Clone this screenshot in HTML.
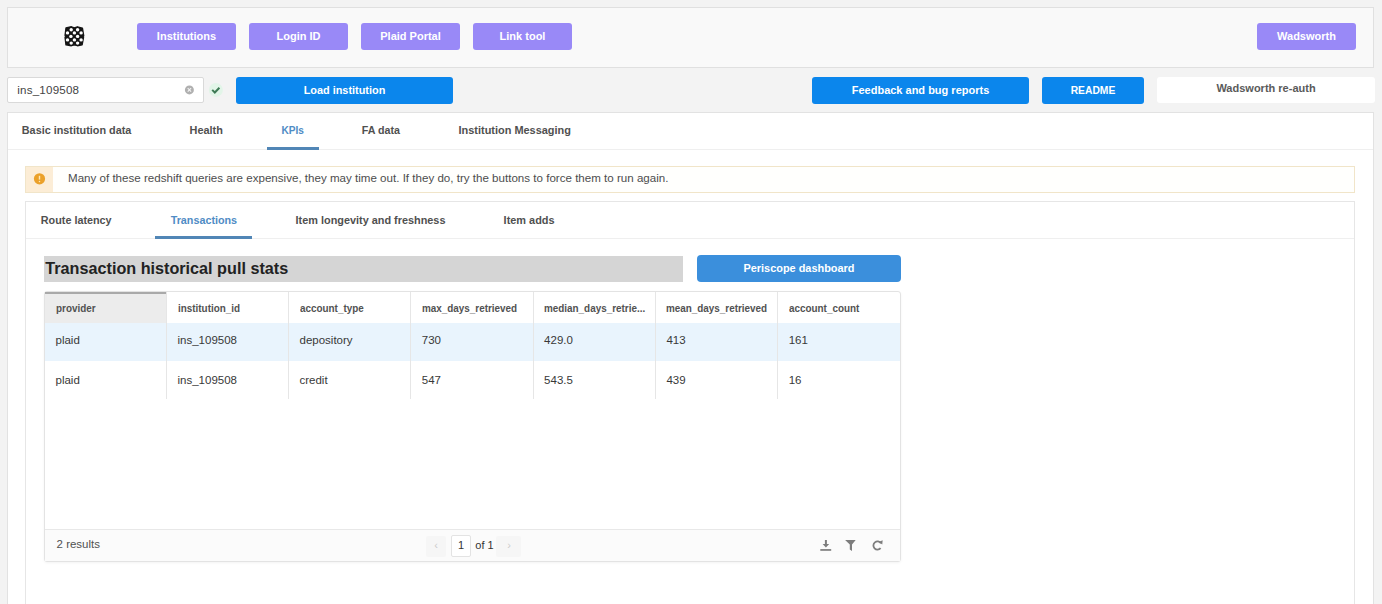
<!DOCTYPE html>
<html><head><meta charset="utf-8"><style>
html,body{margin:0;padding:0;}
body{width:1382px;height:604px;overflow:hidden;position:relative;background:#f3f3f3;font-family:"Liberation Sans",sans-serif;}
body>div,body>svg{position:absolute;}
</style></head><body>
<div style="left:7px;top:7px;width:1367px;height:61px;background:#f9f9f9;border:1px solid #e0e0e0;box-sizing:border-box;"></div>
<svg style="left:60px;top:21px" width="30" height="30" viewBox="0 0 30 30"><polygon points="6.0,7.0 11.4,5.8 14.4,6.8 17.4,5.8 22.4,7.2 23.7,14.9 22.9,15.4 23.5,16.4 22.1,23.8 17.4,24.7 14.4,23.8 11.4,24.7 6.0,23.8 5.1,16.4 5.7,15.4 5.1,14.4" fill="#151515" stroke="#151515" stroke-width="1.4" stroke-linejoin="round"/><circle cx="11.2" cy="8.7" r="1.7" fill="#fff"/><circle cx="17.6" cy="8.7" r="1.7" fill="#fff"/><circle cx="7.5" cy="11.9" r="1.7" fill="#fff"/><circle cx="14.4" cy="11.9" r="1.7" fill="#fff"/><circle cx="21.1" cy="11.9" r="1.7" fill="#fff"/><circle cx="10.9" cy="15.4" r="1.7" fill="#fff"/><circle cx="17.6" cy="15.4" r="1.7" fill="#fff"/><circle cx="7.5" cy="18.9" r="1.7" fill="#fff"/><circle cx="14.4" cy="18.9" r="1.7" fill="#fff"/><circle cx="21.1" cy="18.9" r="1.7" fill="#fff"/><circle cx="11.2" cy="22.1" r="1.7" fill="#fff"/><circle cx="17.6" cy="22.1" r="1.7" fill="#fff"/></svg>
<div style="left:137px;top:23px;width:99px;height:27px;background:#9989f7;border-radius:3px;"></div>
<div style="left:137.0px;width:99px;text-align:center;top:29.39px;font-size:11px;line-height:14px;font-weight:bold;color:#fff;white-space:nowrap;">Institutions</div>
<div style="left:249px;top:23px;width:99px;height:27px;background:#9989f7;border-radius:3px;"></div>
<div style="left:249.0px;width:99px;text-align:center;top:29.39px;font-size:11px;line-height:14px;font-weight:bold;color:#fff;white-space:nowrap;">Login ID</div>
<div style="left:361px;top:23px;width:99px;height:27px;background:#9989f7;border-radius:3px;"></div>
<div style="left:361.0px;width:99px;text-align:center;top:29.39px;font-size:11px;line-height:14px;font-weight:bold;color:#fff;white-space:nowrap;">Plaid Portal</div>
<div style="left:473px;top:23px;width:99px;height:27px;background:#9989f7;border-radius:3px;"></div>
<div style="left:473.0px;width:99px;text-align:center;top:29.39px;font-size:11px;line-height:14px;font-weight:bold;color:#fff;white-space:nowrap;">Link tool</div>
<div style="left:1257px;top:23px;width:99px;height:27px;background:#9989f7;border-radius:3px;"></div>
<div style="left:1257.0px;width:99px;text-align:center;top:29.39px;font-size:11px;line-height:14px;font-weight:bold;color:#fff;white-space:nowrap;">Wadsworth</div>
<div style="left:7px;top:77px;width:197px;height:26px;background:#fff;border:1px solid #d9d9d9;box-sizing:border-box;border-radius:2px;"></div>
<div style="left:17.3px;top:81.78px;font-size:11.6px;line-height:15px;font-weight:normal;color:#444;white-space:nowrap;letter-spacing:0.2px;">ins_109508</div>
<svg style="left:184px;top:85px" width="11" height="11" viewBox="0 0 11 11"><circle cx="5.4" cy="4.9" r="4.5" fill="#b0b0b0"/><path d="M3.7 3.2 L7.1 6.6 M7.1 3.2 L3.7 6.6" stroke="#f4f4f4" stroke-width="1.1"/></svg>
<svg style="left:208px;top:82px" width="16" height="16" viewBox="0 0 16 16"><circle cx="7.9" cy="7.9" r="7" fill="#e2f5e8"/><path d="M4.2 7.9 L6.8 10.5 L11.4 5.8" stroke="#3f7a55" stroke-width="2" fill="none"/></svg>
<div style="left:236px;top:77px;width:217px;height:27px;background:#0b86ec;border-radius:3px;"></div>
<div style="left:236.0px;width:217px;text-align:center;top:82.82px;font-size:10.9px;line-height:14px;font-weight:bold;color:#fff;white-space:nowrap;">Load institution</div>
<div style="left:812px;top:77px;width:217px;height:27px;background:#0b86ec;border-radius:3px;"></div>
<div style="left:812.0px;width:217px;text-align:center;top:82.79px;font-size:11px;line-height:14px;font-weight:bold;color:#fff;white-space:nowrap;">Feedback and bug reports</div>
<div style="left:1042px;top:77px;width:102px;height:27px;background:#0b86ec;border-radius:3px;"></div>
<div style="left:1042.0px;width:102px;text-align:center;top:83.53px;font-size:10.3px;line-height:13px;font-weight:bold;color:#fff;white-space:nowrap;">README</div>
<div style="left:1157px;top:77px;width:218px;height:26px;background:#fff;border-radius:3px;"></div>
<div style="left:1157.0px;width:218px;text-align:center;top:81.29px;font-size:11.0px;line-height:14px;font-weight:bold;color:#5a5a5a;white-space:nowrap;">Wadsworth re-auth</div>
<div style="left:7px;top:112px;width:1367px;height:500px;background:#fff;border:1px solid #e2e2e2;box-sizing:border-box;"></div>
<div style="left:8px;top:149px;width:1365px;height:1px;background:#efefef;"></div>
<div style="left:21.8px;top:122.84px;font-size:10.84px;line-height:14px;font-weight:bold;color:#505050;white-space:nowrap;">Basic institution data</div>
<div style="left:189.6px;top:122.82px;font-size:10.9px;line-height:14px;font-weight:bold;color:#505050;white-space:nowrap;">Health</div>
<div style="left:281.5px;top:123.60px;font-size:10.1px;line-height:13px;font-weight:bold;color:#4f8cc5;white-space:nowrap;">KPIs</div>
<div style="left:361.8px;top:122.89px;font-size:10.7px;line-height:14px;font-weight:bold;color:#505050;white-space:nowrap;">FA data</div>
<div style="left:458.5px;top:122.81px;font-size:10.94px;line-height:14px;font-weight:bold;color:#505050;white-space:nowrap;">Institution Messaging</div>
<div style="left:267px;top:147px;width:52px;height:3px;background:#5186b6;"></div>
<div style="left:25px;top:166px;width:1330px;height:27px;background:#fffffd;border:1px solid #f1e5c9;box-sizing:border-box;"></div>
<div style="left:26px;top:167px;width:27px;height:25px;background:#fcedd6;"></div>
<svg style="left:33px;top:172px" width="13" height="13" viewBox="0 0 13 13"><circle cx="6.5" cy="6.8" r="5.6" fill="#eba12a"/><path d="M6.5 3.8 V7.6" stroke="#fde9b8" stroke-width="1.4"/><circle cx="6.5" cy="9.4" r="0.75" fill="#fde9b8"/></svg>
<div style="left:68px;top:170.88px;font-size:11.59px;line-height:15px;font-weight:normal;color:#4d4d4d;white-space:nowrap;">Many of these redshift queries are expensive, they may time out. If they do, try the buttons to force them to run again.</div>
<div style="left:25px;top:201px;width:1330px;height:420px;background:#fff;border:1px solid #e6e6e6;box-sizing:border-box;"></div>
<div style="left:26px;top:238px;width:1328px;height:1px;background:#efefef;"></div>
<div style="left:40.8px;top:212.56px;font-size:10.8px;line-height:14px;font-weight:bold;color:#505050;white-space:nowrap;">Route latency</div>
<div style="left:170.7px;top:212.56px;font-size:10.78px;line-height:14px;font-weight:bold;color:#4f8cc5;white-space:nowrap;">Transactions</div>
<div style="left:295.6px;top:212.53px;font-size:10.88px;line-height:14px;font-weight:bold;color:#505050;white-space:nowrap;">Item longevity and freshness</div>
<div style="left:503.6px;top:212.51px;font-size:10.93px;line-height:14px;font-weight:bold;color:#505050;white-space:nowrap;">Item adds</div>
<div style="left:155px;top:236px;width:97px;height:3px;background:#5186b6;"></div>
<div style="left:44px;top:256px;width:639px;height:26px;background:#d5d5d5;"></div>
<div style="left:45.3px;top:257.99px;font-size:16.2px;line-height:21px;font-weight:bold;color:#222;white-space:nowrap;">Transaction historical pull stats</div>
<div style="left:697px;top:255px;width:204px;height:27px;background:#3b8fdc;border-radius:4px;"></div>
<div style="left:697.0px;width:204px;text-align:center;top:261.41px;font-size:10.93px;line-height:14px;font-weight:bold;color:#fff;white-space:nowrap;">Periscope dashboard</div>
<div style="left:44px;top:291px;width:857px;height:271px;background:#fff;border:1px solid #e3e3e3;box-sizing:border-box;border-radius:3px;box-shadow:0 1px 3px rgba(0,0,0,0.05);"></div>
<div style="left:45px;top:292px;width:121px;height:31px;background:#ececec;"></div>
<div style="left:45px;top:292px;width:121px;height:2px;background:#a9a9a9;"></div>
<div style="left:45px;top:323px;width:855px;height:38px;background:#e9f4fd;"></div>
<div style="left:166px;top:292px;width:1px;height:107px;background:#e6e6e6;"></div>
<div style="left:288px;top:292px;width:1px;height:107px;background:#e6e6e6;"></div>
<div style="left:410px;top:292px;width:1px;height:107px;background:#e6e6e6;"></div>
<div style="left:533px;top:292px;width:1px;height:107px;background:#e6e6e6;"></div>
<div style="left:655px;top:292px;width:1px;height:107px;background:#e6e6e6;"></div>
<div style="left:777px;top:292px;width:1px;height:107px;background:#e6e6e6;"></div>
<div style="left:55.5px;top:301.02px;font-size:10.9px;line-height:14px;font-weight:bold;color:#525252;white-space:nowrap;transform:scaleX(0.908);transform-origin:0 0;">provider</div>
<div style="left:55.5px;top:333.12px;font-size:11.5px;line-height:15px;font-weight:normal;color:#383838;white-space:nowrap;">plaid</div>
<div style="left:55.5px;top:372.52px;font-size:11.5px;line-height:15px;font-weight:normal;color:#383838;white-space:nowrap;">plaid</div>
<div style="left:177.5px;top:301.02px;font-size:10.9px;line-height:14px;font-weight:bold;color:#525252;white-space:nowrap;transform:scaleX(0.908);transform-origin:0 0;">institution_id</div>
<div style="left:177.5px;top:333.12px;font-size:11.5px;line-height:15px;font-weight:normal;color:#383838;white-space:nowrap;">ins_109508</div>
<div style="left:177.5px;top:372.52px;font-size:11.5px;line-height:15px;font-weight:normal;color:#383838;white-space:nowrap;">ins_109508</div>
<div style="left:299.5px;top:301.02px;font-size:10.9px;line-height:14px;font-weight:bold;color:#525252;white-space:nowrap;transform:scaleX(0.908);transform-origin:0 0;">account_type</div>
<div style="left:299.5px;top:333.12px;font-size:11.5px;line-height:15px;font-weight:normal;color:#383838;white-space:nowrap;">depository</div>
<div style="left:299.5px;top:372.52px;font-size:11.5px;line-height:15px;font-weight:normal;color:#383838;white-space:nowrap;">credit</div>
<div style="left:421.8px;top:301.02px;font-size:10.9px;line-height:14px;font-weight:bold;color:#525252;white-space:nowrap;transform:scaleX(0.908);transform-origin:0 0;">max_days_retrieved</div>
<div style="left:421.8px;top:333.12px;font-size:11.5px;line-height:15px;font-weight:normal;color:#383838;white-space:nowrap;">730</div>
<div style="left:421.8px;top:372.52px;font-size:11.5px;line-height:15px;font-weight:normal;color:#383838;white-space:nowrap;">547</div>
<div style="left:544.1px;top:301.02px;font-size:10.9px;line-height:14px;font-weight:bold;color:#525252;white-space:nowrap;transform:scaleX(0.908);transform-origin:0 0;">median_days_retrie...</div>
<div style="left:544.1px;top:333.12px;font-size:11.5px;line-height:15px;font-weight:normal;color:#383838;white-space:nowrap;">429.0</div>
<div style="left:544.1px;top:372.52px;font-size:11.5px;line-height:15px;font-weight:normal;color:#383838;white-space:nowrap;">543.5</div>
<div style="left:666.4px;top:301.02px;font-size:10.9px;line-height:14px;font-weight:bold;color:#525252;white-space:nowrap;transform:scaleX(0.908);transform-origin:0 0;">mean_days_retrieved</div>
<div style="left:666.4px;top:333.12px;font-size:11.5px;line-height:15px;font-weight:normal;color:#383838;white-space:nowrap;">413</div>
<div style="left:666.4px;top:372.52px;font-size:11.5px;line-height:15px;font-weight:normal;color:#383838;white-space:nowrap;">439</div>
<div style="left:788.7px;top:301.02px;font-size:10.9px;line-height:14px;font-weight:bold;color:#525252;white-space:nowrap;transform:scaleX(0.908);transform-origin:0 0;">account_count</div>
<div style="left:788.7px;top:333.12px;font-size:11.5px;line-height:15px;font-weight:normal;color:#383838;white-space:nowrap;">161</div>
<div style="left:788.7px;top:372.52px;font-size:11.5px;line-height:15px;font-weight:normal;color:#383838;white-space:nowrap;">16</div>
<div style="left:45px;top:529px;width:855px;height:32px;background:#fbfbfb;border-top:1px solid #e8e8e8;box-sizing:border-box;"></div>
<div style="left:56.6px;top:537.32px;font-size:11.48px;line-height:15px;font-weight:normal;color:#505050;white-space:nowrap;">2 results</div>
<div style="left:426px;top:536px;width:20px;height:21px;background:#f6f6f6;border-radius:2px;"></div>
<div style="left:496px;top:536px;width:25px;height:21px;background:#f6f6f6;border-radius:2px;"></div>
<div style="left:451px;top:535px;width:20px;height:22px;background:#fff;border:1px solid #e3e3e3;box-sizing:border-box;border-radius:2px;"></div>
<div style="left:451.0px;width:20px;text-align:center;top:537.99px;font-size:11px;line-height:14px;font-weight:normal;color:#333;white-space:nowrap;">1</div>
<div style="left:475.3px;top:537.99px;font-size:11px;line-height:14px;font-weight:normal;color:#333;white-space:nowrap;">of 1</div>
<div style="left:431.0px;width:10px;text-align:center;top:537.99px;font-size:11px;line-height:14px;font-weight:normal;color:#ccc;white-space:nowrap;">&#8249;</div>
<div style="left:504.0px;width:10px;text-align:center;top:537.99px;font-size:11px;line-height:14px;font-weight:normal;color:#ccc;white-space:nowrap;">&#8250;</div>
<svg style="left:816px;top:536px" width="74" height="20" viewBox="816 536 74 20"><g fill="#7d7d7d" stroke="none"><rect x="824.9" y="540" width="2" height="5"/><path d="M822.6 544.1 H829.2 L825.9 547.6 Z"/><rect x="820.3" y="549.1" width="10.9" height="1.7"/><path d="M845.1 540 H855.7 L852 544.6 V550.9 L849.8 549.6 V544.6 Z"/></g><path d="M880.9 543.2 A4.1 4.1 0 1 0 880.6 548.2" fill="none" stroke="#7d7d7d" stroke-width="1.8"/><path d="M878.6 541.9 L882.6 540.2 L882.3 544.6 Z" fill="#7d7d7d"/></svg>
</body></html>
